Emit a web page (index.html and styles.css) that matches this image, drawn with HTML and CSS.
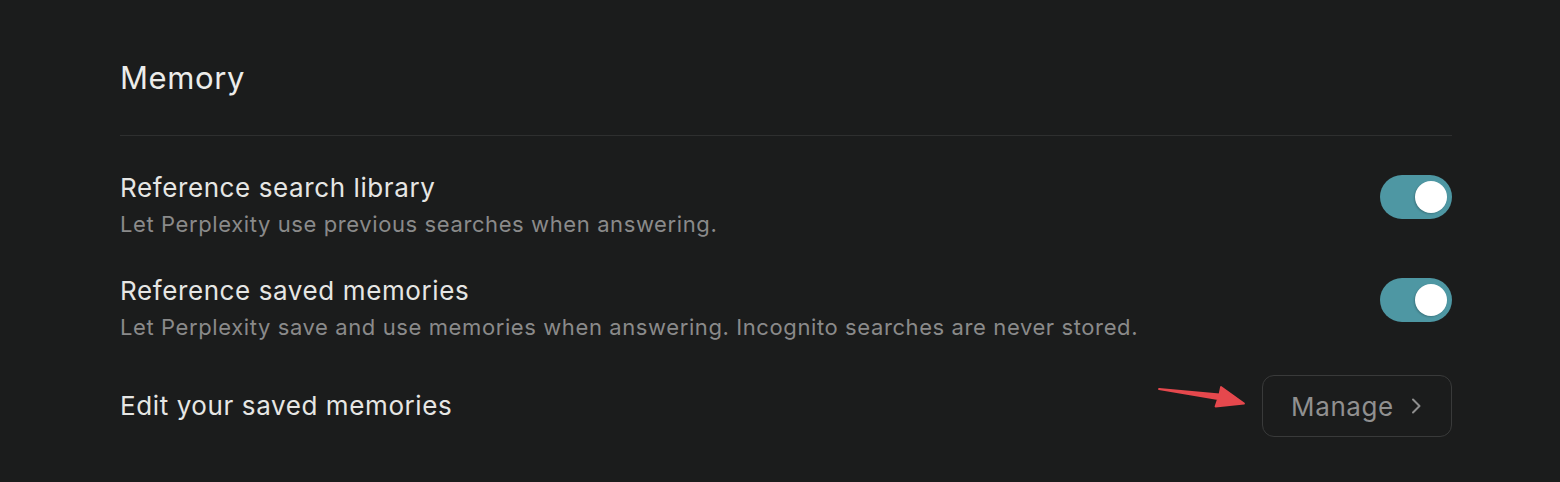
FILE: index.html
```html
<!DOCTYPE html>
<html lang="en">
<head>
<meta charset="utf-8">
<title>Memory</title>
<link rel="stylesheet" href="styles.css">
</head>
<body>
<main class="panel">
  <h1 class="heading">Memory</h1>
  <div class="divider"></div>
  <section class="rows">
    <div class="row">
      <div class="text">
        <div class="title">Reference search library</div>
        <div class="desc">Let Perplexity use previous searches when answering.</div>
      </div>
      <div class="toggle on"><span class="knob"></span></div>
    </div>
    <div class="row row-second">
      <div class="text">
        <div class="title">Reference saved memories</div>
        <div class="desc">Let Perplexity save and use memories when answering. Incognito searches are never stored.</div>
      </div>
      <div class="toggle on"><span class="knob"></span></div>
    </div>
    <div class="row row-center">
      <div class="text">
        <div class="title">Edit your saved memories</div>
      </div>
      <div class="action">
        <svg class="arrow" width="90" height="26" viewBox="0 0 90 26" aria-hidden="true">
          <path d="M1 5 L60 15 L57.5 22.5 L86 19.5 L63 3 L61.5 10.5 Z" fill="#e5484d" stroke="#e5484d" stroke-width="1.8" stroke-linejoin="round"/>
        </svg>
        <button class="manage">Manage
          <svg class="chev" width="14" height="20" viewBox="0 0 14 20" aria-hidden="true">
            <path d="M4 3.5 L10.5 10 L4 16.5" fill="none" stroke="#8e8e8e" stroke-width="2" stroke-linecap="round" stroke-linejoin="round"/>
          </svg>
        </button>
      </div>
    </div>
  </section>
</main>
</body>
</html>
```
FILE: styles.css
```css
html, body {
  margin: 0;
  padding: 0;
  background: #1b1c1c;
}
body {
  font-family: Inter, "Liberation Sans", sans-serif;
  color: #e8e8e6;
  letter-spacing: 0.6px;
}
.panel {
  padding: 60px 108px 0 120px;
}
.heading {
  margin: 0;
  font-size: 31px;
  font-weight: 400;
  line-height: 36px;
  color: #ececea;
}
.divider {
  height: 1px;
  background: #2e2f2f;
  margin-top: 39px;
}
.rows {
  display: flex;
  flex-direction: column;
  gap: 32px;
  padding-top: 35px;
}
.row {
  display: flex;
  justify-content: space-between;
  align-items: flex-start;
}
.row-second {
  margin-top: 1px;
}
.row-center {
  align-items: center;
  margin-top: -1px;
}
.title {
  font-size: 26px;
  line-height: 34px;
  color: #e6e6e4;
}
.desc {
  font-size: 22px;
  line-height: 34px;
  margin-top: 2px;
  color: #8a8a8a;
}
.toggle {
  width: 72px;
  height: 44px;
  border-radius: 22px;
  background: #4e97a3;
  margin-top: 4px;
  display: flex;
  align-items: center;
  justify-content: flex-end;
  padding: 0 5px;
  box-sizing: border-box;
}
.knob {
  width: 32px;
  height: 32px;
  border-radius: 50%;
  background: #ffffff;
  box-shadow: -1px 1px 2px rgba(0,0,0,0.2);
}
.action {
  position: relative;
}
.arrow {
  position: absolute;
  left: -104px;
  top: 9px;
}
.manage {
  width: 190px;
  height: 62px;
  box-sizing: border-box;
  border: 1.5px solid #393a3a;
  border-radius: 12px;
  background: transparent;
  color: #909090;
  font-family: Inter, "Liberation Sans", sans-serif;
  font-size: 26px;
  letter-spacing: 0.6px;
  display: flex;
  align-items: center;
  justify-content: center;
  gap: 15px;
  padding: 0 0 0 0;
}
.chev {
  display: block;
}
```
